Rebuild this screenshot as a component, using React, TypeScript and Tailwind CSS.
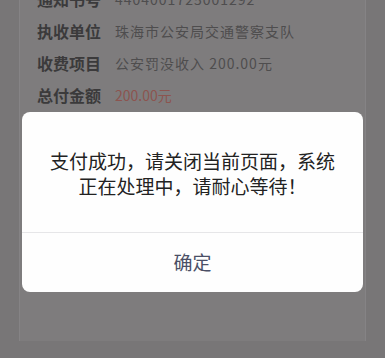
const font = { fontFamily: '"Noto Sans CJK SC", "Noto Sans", sans-serif' };

const rows = [
  { label: "通知书号", value: "4404001725001292" },
  { label: "执收单位", value: "珠海市公安局交通警察支队" },
  { label: "收费项目", value: "公安罚没收入  200.00元" },
];

export default function App() {
  return (
    <div className="relative w-[385px] h-[358px] overflow-hidden bg-[#787677]" style={font}>
      {/* background page, dimmed by the mask */}
      <div className="mx-[19px] h-full bg-[#7e7c7d] border-x border-[#858385]">
        <div className="-mt-[17px] pl-[17px]">
          {rows.map((r) => (
            <div key={r.label} className="flex items-center h-[32px]">
              <span className="w-[78px] text-[16px] font-semibold text-[#3b3a3b]">{r.label}</span>
              <span className="text-[14px] text-[#4e4d4e] tracking-[1px]">{r.value}</span>
            </div>
          ))}
          <div className="flex items-center h-[32px]">
            <span className="w-[78px] text-[16px] font-semibold text-[#3b3a3b]">总付金额</span>
            <span className="text-[14px] text-[#8c544f]">200.00元</span>
          </div>
        </div>
      </div>

      {/* dialog */}
      <div className="absolute left-[22px] top-[112px] w-[341px] rounded-[8px] bg-[#fefefe] overflow-hidden">
        <div className="h-[120px] flex flex-col items-center justify-center pt-[2px] text-[19px] leading-[25px] text-[#222222] text-center">
          <p>支付成功，请关闭当前页面，系统</p>
          <p>正在处理中，请耐心等待！</p>
        </div>
        <div className="h-px bg-[#e6e6e8]" />
        <div className="h-[59px] flex items-center justify-center text-[19px] text-[#4a4f66]">确定</div>
      </div>
    </div>
  );
}
